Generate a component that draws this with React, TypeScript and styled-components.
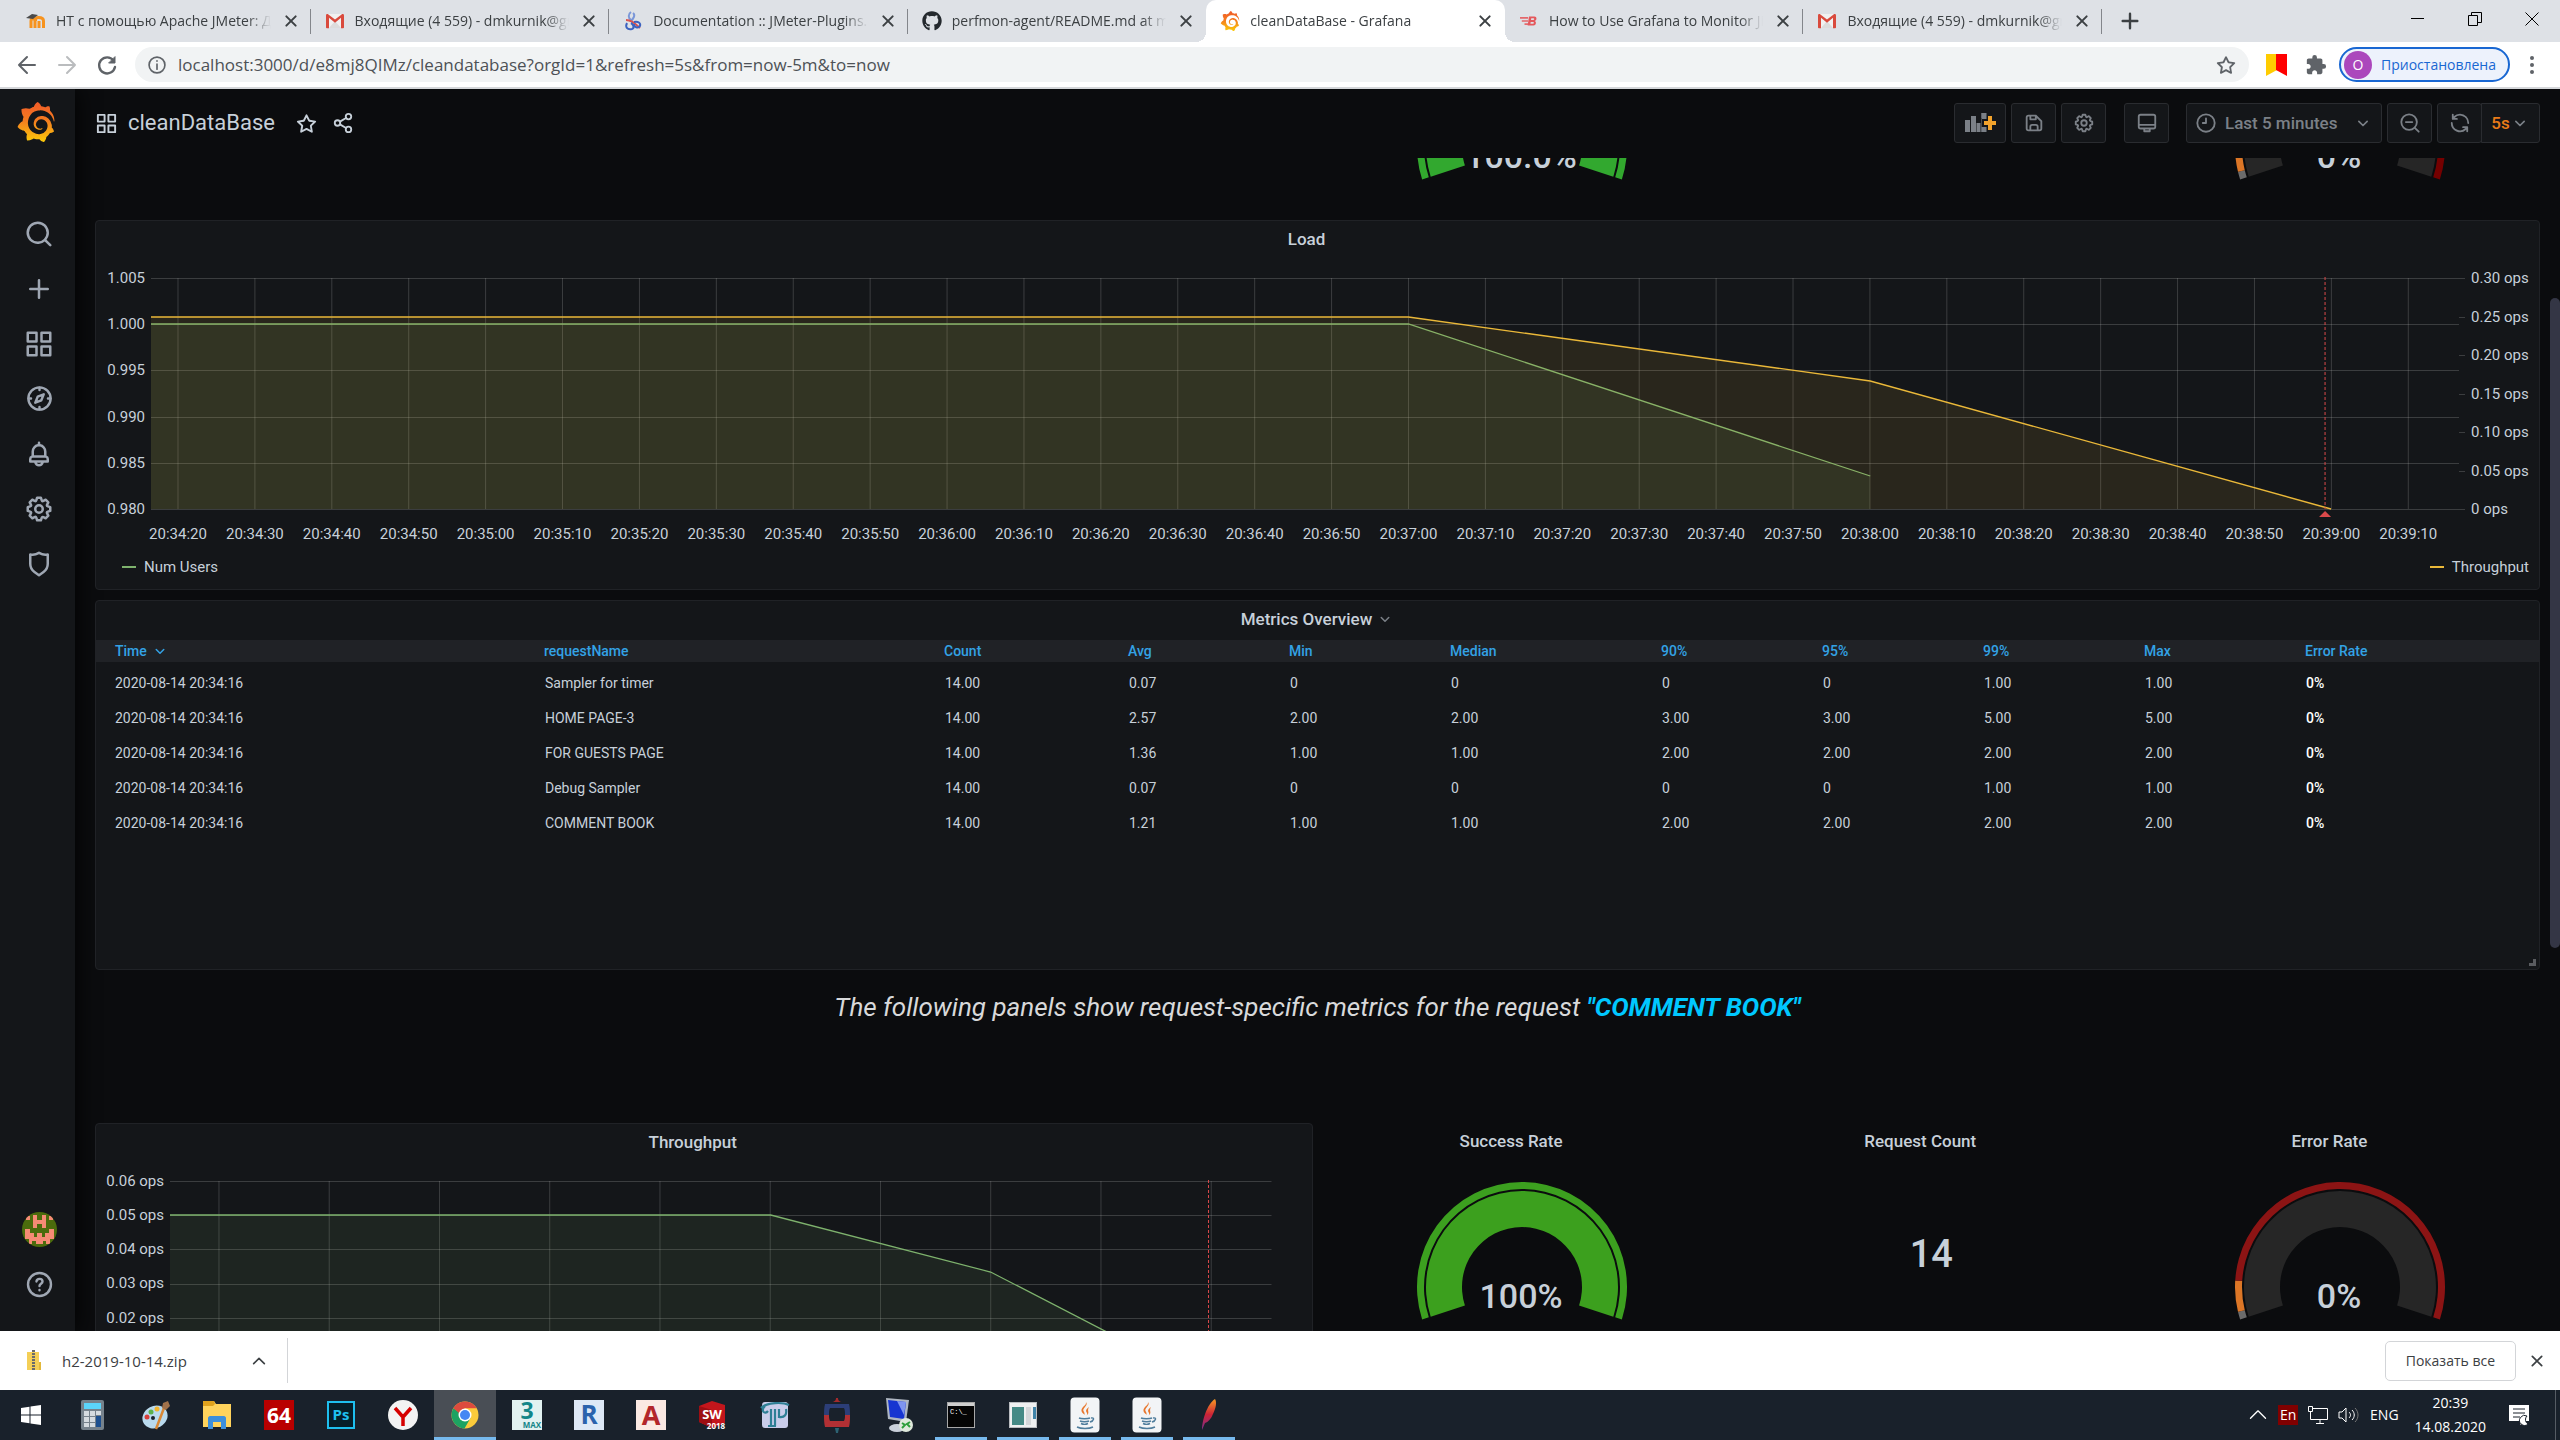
import React from "react";
import styled, { createGlobalStyle, css } from "styled-components";
import { SiGrafana } from "react-icons/si";
import { FaGithub } from "react-icons/fa";
import { MdExtension } from "react-icons/md";

const chromeFont = `"Open Sans", "Noto Sans", sans-serif`;
const grafanaFont = `Roboto, "Liberation Sans", sans-serif`;

const Global = createGlobalStyle`
  *, *::before, *::after { box-sizing: border-box; }
  body { margin: 0; background: #0b0c0e; overflow: hidden; }
  button { border: 0; padding: 0; background: none; font: inherit; color: inherit; cursor: pointer; }
  svg { display: block; flex: none; }
`;

const Screen = styled.div`
  display: flex;
  flex-direction: column;
  height: 100vh;
  font-family: ${grafanaFont};
`;

/* ---------- icons ---------- */

const P = {
  apps: "M10,13H3a1,1,0,0,0-1,1v7a1,1,0,0,0,1,1h7a1,1,0,0,0,1-1V14A1,1,0,0,0,10,13ZM9,20H4V15H9ZM21,2H14a1,1,0,0,0-1,1v7a1,1,0,0,0,1,1h7a1,1,0,0,0,1-1V3A1,1,0,0,0,21,2ZM20,9H15V4h5Zm1,4H14a1,1,0,0,0-1,1v7a1,1,0,0,0,1,1h7a1,1,0,0,0,1-1V14A1,1,0,0,0,21,13Zm-1,7H15V15h5ZM10,2H3A1,1,0,0,0,2,3v7a1,1,0,0,0,1,1h7a1,1,0,0,0,1-1V3A1,1,0,0,0,10,2ZM9,9H4V4H9Z",
  plus: "M19,11H13V5a1,1,0,0,0-2,0v6H5a1,1,0,0,0,0,2h6v6a1,1,0,0,0,2,0V13h6a1,1,0,0,0,0-2Z",
  search: "M21.71,20.29,18,16.61A9,9,0,1,0,16.61,18l3.68,3.68a1,1,0,0,0,1.42,0A1,1,0,0,0,21.71,20.29ZM11,18a7,7,0,1,1,7-7A7,7,0,0,1,11,18Z",
  bell: "M18,13.18V10a6,6,0,0,0-5-5.91V3a1,1,0,0,0-2,0V4.09A6,6,0,0,0,6,10v3.18A3,3,0,0,0,4,16v2a1,1,0,0,0,1,1H8.14a4,4,0,0,0,7.72,0H19a1,1,0,0,0,1-1V16A3,3,0,0,0,18,13.18ZM8,10a4,4,0,0,1,8,0v3H8Zm4,10a2,2,0,0,1-1.72-1h3.44A2,2,0,0,1,12,20Zm6-3H6V16a1,1,0,0,1,1-1H17a1,1,0,0,1,1,1Z",
  cog: "M21.32,9.55l-1.89-.63.89-1.78A1,1,0,0,0,20.13,6L18,3.87a1,1,0,0,0-1.15-.19l-1.78.89-.63-1.89A1,1,0,0,0,13.5,2h-3a1,1,0,0,0-.95.68L8.92,4.57,7.14,3.68A1,1,0,0,0,6,3.87L3.87,6a1,1,0,0,0-.19,1.15l.89,1.78-1.89.63A1,1,0,0,0,2,10.5v3a1,1,0,0,0,.68.95l1.89.63-.89,1.78A1,1,0,0,0,3.87,18L6,20.13a1,1,0,0,0,1.15.19l1.78-.89.63,1.89a1,1,0,0,0,.95.68h3a1,1,0,0,0,.95-.68l.63-1.89,1.78.89A1,1,0,0,0,18,20.13L20.13,18a1,1,0,0,0,.19-1.15l-.89-1.78,1.89-.63A1,1,0,0,0,22,13.5v-3A1,1,0,0,0,21.32,9.55ZM20,12.78l-1.2.4A2,2,0,0,0,17.64,16l.57,1.14-1.1,1.1L16,17.64a2,2,0,0,0-2.79,1.16l-.4,1.2H11.22l-.4-1.2A2,2,0,0,0,8,17.64l-1.14.57-1.1-1.1L6.36,16A2,2,0,0,0,5.2,13.18L4,12.78V11.22l1.2-.4A2,2,0,0,0,6.36,8L5.79,6.89l1.1-1.1L8,6.36A2,2,0,0,0,10.82,5.2l.4-1.2h1.56l.4,1.2A2,2,0,0,0,16,6.36l1.14-.57,1.1,1.1L17.64,8a2,2,0,0,0,1.16,2.79l1.2.4ZM12,8a4,4,0,1,0,4,4A4,4,0,0,0,12,8Zm0,6a2,2,0,1,1,2-2A2,2,0,0,1,12,14Z",
  shield: "M19.63,3.65a1,1,0,0,0-.84-.2,8,8,0,0,1-6.22-1.27,1,1,0,0,0-1.14,0A8,8,0,0,1,5.21,3.45a1,1,0,0,0-.84.2A1,1,0,0,0,4,4.43v7.45a9,9,0,0,0,3.77,7.33l3.65,2.6a1,1,0,0,0,1.16,0l3.65-2.6A9,9,0,0,0,20,11.88V4.43A1,1,0,0,0,19.63,3.65ZM18,11.88a7,7,0,0,1-2.93,5.7L12,19.77,8.93,17.58A7,7,0,0,1,6,11.88V5.58a10,10,0,0,0,6-1.39,10,10,0,0,0,6,1.39Z",
  star: "M22,9.67A1,1,0,0,0,21.14,9l-5.69-.83L12.9,3a1,1,0,0,0-1.8,0L8.55,8.16,2.86,9a1,1,0,0,0-.81.68,1,1,0,0,0,.25,1l4.13,4-1,5.68A1,1,0,0,0,6.9,21.44L12,18.77l5.1,2.67a.93.93,0,0,0,.46.12,1,1,0,0,0,.59-.19,1,1,0,0,0,.4-1l-1-5.68,4.13-4A1,1,0,0,0,22,9.67Zm-6.15,4a1,1,0,0,0-.29.88l.72,4.2-3.76-2a1.06,1.06,0,0,0-.94,0l-3.76,2,.72-4.2a1,1,0,0,0-.29-.88l-3-3,4.21-.61a1,1,0,0,0,.76-.55L12,5.7l1.88,3.82a1,1,0,0,0,.76.55l4.21.61Z",
  save: "M20.71,9.29l-6-6a1,1,0,0,0-.32-.21A1.09,1.09,0,0,0,14,3H6A3,3,0,0,0,3,6V18a3,3,0,0,0,3,3H18a3,3,0,0,0,3-3V10A1,1,0,0,0,20.71,9.29ZM9,5h4V7H9Zm6,14H9V16a1,1,0,0,1,1-1h4a1,1,0,0,1,1,1Zm4-1a1,1,0,0,1-1,1H17V16a3,3,0,0,0-3-3H10a3,3,0,0,0-3,3v3H6a1,1,0,0,1-1-1V6A1,1,0,0,1,6,5H7V8A1,1,0,0,0,8,9h6a1,1,0,0,0,1-1V6.41l4,4Z",
  sync: "M19.91,15.51H15.38a1,1,0,0,0,0,2h2.4A8,8,0,0,1,4,12a1,1,0,1,0-2,0,10,10,0,0,0,16.88,7.23V21a1,1,0,0,0,2,0V16.5A1,1,0,0,0,19.91,15.51ZM12,2A10,10,0,0,0,5.12,4.77V3a1,1,0,0,0-2,0V7.5a1,1,0,0,0,1,1h4.5a1,1,0,0,0,0-2H6.22A8,8,0,0,1,20,12a1,1,0,0,0,2,0A10,10,0,0,0,12,2Z",
};

const Glyph = ({ name, size }: { name: keyof typeof P; size: number }) => (
  <svg width={size} height={size} viewBox="0 0 24 24" fill="currentColor" aria-hidden="true">
    <path d={P[name]} />
  </svg>
);

const Line = ({ size, w = 2, children }: { size: number; w?: number; children: React.ReactNode }) => (
  <svg width={size} height={size} viewBox="0 0 24 24" fill="none" stroke="currentColor" strokeWidth={w} strokeLinecap="round" strokeLinejoin="round" aria-hidden="true">
    {children}
  </svg>
);

const Close = ({ size = 16, w = 3 }) => (
  <Line size={size} w={w}><path d="M5 5l14 14M19 5L5 19" /></Line>
);
const Caret = ({ size = 18 }) => (
  <Line size={size}><path d="M7 10l5 5 5-5" /></Line>
);
const RangeIcon = () => (
  <Line size={22}><circle cx="12" cy="12" r="9.500" /><path d="M12 7v5H8.500" /></Line>
);
const GrafanaMark = ({ size }: { size: number }) => <SiGrafana size={size} fill="url(#flame)" stroke="none" />;

const Gmail = () => (
  <svg width="20" height="20" viewBox="0 0 20 20">
    <path d="M2 3h16v14H2z" fill="#f1f1f1" />
    <path d="M4 17l6-7 6 7z" fill="#dcdcdc" />
    <path d="M1 4.400v12c0 .5.4.8.9.8H4V6.800l6 5 6-5V17.200h2.100c.5 0 .9-.3.9-.8v-12c0-1.300-1.500-1.700-2.400-1L10 8.600 3.400 3.400C2.500 2.700 1 3.100 1 4.400z" fill="#d94a3d" />
  </svg>
);
const Moodle = () => (
  <svg width="20" height="20" viewBox="0 0 20 20" fill="none">
    <path d="M5 17V10c0-3 4-3 4 0v7M9.500 10c0-3 1-3.500 3-3.500s5 .5 5 3.500v7M13 17v-7" stroke="#f7931e" strokeWidth="3" />
    <path d="M0 7l6-4 6 1-5 4z" fill="#4a4a4a" />
  </svg>
);
const PluginMark = () => (
  <svg width="20" height="20" viewBox="0 0 20 20" fill="none" strokeWidth="2">
    <path d="M8 1c-3 2-3 6 0 8M10 2c3 2 0 6-2 8" stroke="#7b97d8" />
    <path d="M3 9c5 0 8 3 14 8" stroke="#d9534f" />
    <path d="M4 12c-2 4 0 7 5 6 3-1 1-5-1-6M11 11c4-1 7 1 6 4-2 3-6 1-6-2" stroke="#3b62c0" />
  </svg>
);
const BlazeMark = () => (
  <svg width="20" height="18" viewBox="0 0 22 20">
    <path d="M1 6.500h9M3 10h7M6 13.500h4" stroke="#e4686c" strokeWidth="1.800" />
    <path d="M11 5h6c3 0 3 4 .5 5 2 .8 1.500 5-1.500 5h-6.500zm2.500 2l-.3 2h2.500c1.500 0 1.500-2 .3-2zm-.6 4l-.3 2h2.700c1.500 0 1.500-2 .3-2z" fill="#e4585c" fillRule="evenodd" />
  </svg>
);

/* ---------- browser chrome ---------- */

const TabStrip = styled.div`
  display: flex;
  flex: none;
  height: 42px;
  padding-left: 12px;
  background: #dee1e6;
  color: #3c4043;
  font: 14px/20px ${chromeFont};
`;
const Tabs = styled.div`
  display: flex;
  flex: 0 1 2090px;
  min-width: 0;
`;
const Tab = styled.div<{ $active?: boolean; $divider?: boolean }>`
  position: relative;
  display: flex;
  flex: 1 1 0;
  min-width: 0;
  align-items: center;
  gap: 10px;
  padding: 0 10px 0 14px;
  ${(p) => p.$divider && css`
    &::after { content: ""; position: absolute; right: 0; top: 9px; width: 1px; height: 25px; background: #83868b; }
  `}
  ${(p) => p.$active && css`
    background: #fff;
    border-radius: 10px 10px 0 0;
    &::before, &::after {
      content: ""; position: absolute; bottom: 0; width: 10px; height: 10px;
    }
    &::before { left: -10px; background: radial-gradient(circle at 0 0, transparent 10px, #fff 10px); }
    &::after { right: -10px; background: radial-gradient(circle at 100% 0, transparent 10px, #fff 10px); }
  `}
`;
const TabTitle = styled.a`
  flex: 1;
  min-width: 0;
  overflow: hidden;
  white-space: nowrap;
  color: inherit;
  text-decoration: none;
  mask-image: linear-gradient(to right, #000 calc(100% - 24px), transparent);
`;
const TabClose = styled.button`
  display: grid;
  place-items: center;
  width: 20px;
  height: 20px;
`;
const NewTab = styled.button`
  display: grid;
  place-items: center;
  width: 56px;
`;
const WindowButtons = styled.div`
  display: flex;
  margin-left: auto;
  color: #111;
`;
const WindowButton = styled.button`
  display: grid;
  place-items: center;
  width: 57px;
  height: 37px;
`;

const Toolbar = styled.div`
  display: flex;
  flex: none;
  align-items: center;
  height: 47px;
  padding: 0 18px 0 7px;
  background: #fff;
  border-bottom: 2px solid #d5d7da;
  color: #5f6368;
  font: 17px/22px ${chromeFont};
`;
const NavButton = styled.button<{ $dim?: boolean }>`
  display: grid;
  place-items: center;
  width: 40px;
  height: 35px;
  color: ${(p) => (p.$dim ? "#babcbe" : "#5f6368")};
`;
const Omnibox = styled.label`
  display: flex;
  flex: 1;
  min-width: 0;
  align-items: center;
  gap: 11px;
  height: 35px;
  margin: 0 17px 0 8px;
  padding: 0 12px;
  border-radius: 18px;
  background: #f1f3f4;
`;
const Url = styled.input`
  flex: 1;
  min-width: 0;
  border: 0;
  padding: 0;
  outline: 0;
  background: none;
  color: #4d5156;
  font: inherit;
`;
const Extensions = styled.div`
  display: flex;
  align-items: center;
  gap: 18px;
`;
const Profile = styled.button`
  && {
    display: flex;
    align-items: center;
    gap: 9px;
    height: 35px;
    margin: 0 12px;
    padding: 0 12px 0 3px;
    border: 2px solid #1967d2;
    border-radius: 18px;
    background: #edf2fc;
    color: #1967d2;
    font-size: 14px;
  }
`;
const ProfileBadge = styled.span`
  width: 28px;
  height: 28px;
  border-radius: 50%;
  background: #ab47bc;
  color: #fff;
  line-height: 28px;
  text-align: center;
`;

const tabs = [
  { icon: <Moodle />, title: "НТ с помощью Apache JMeter: Д", divider: true },
  { icon: <Gmail />, title: "Входящие (4 559) - dmkurnik@gmail.com", divider: true },
  { icon: <PluginMark />, title: "Documentation :: JMeter-Plugins.org", divider: true },
  { icon: <FaGithub size={20} color="#24292e" />, title: "perfmon-agent/README.md at master" },
  { icon: <GrafanaMark size={20} />, title: "cleanDataBase - Grafana", active: true },
  { icon: <BlazeMark />, title: "How to Use Grafana to Monitor JMeter", divider: true },
  { icon: <Gmail />, title: "Входящие (4 559) - dmkurnik@gmail.com", divider: true },
];

const Browser = () => (
  <>
    <TabStrip>
      <Tabs>
        {tabs.map((t, i) => (
          <Tab key={i} $active={t.active} $divider={t.divider}>
            {t.icon}
            <TabTitle href="#">{t.title}</TabTitle>
            <TabClose aria-label="Закрыть вкладку"><Close /></TabClose>
          </Tab>
        ))}
      </Tabs>
      <NewTab aria-label="Новая вкладка"><Line size={22} w={2.600}><path d="M12 4v16M4 12h16" /></Line></NewTab>
      <WindowButtons>
        <WindowButton aria-label="Свернуть"><svg width="14" height="14"><path d="M0 6.500h13" stroke="#000" /></svg></WindowButton>
        <WindowButton aria-label="Развернуть"><svg width="14" height="14" fill="none" stroke="#000"><path d="M.5 3.500h9v10h-9zM3.500 3.500v-3h10v10h-4" /></svg></WindowButton>
        <WindowButton aria-label="Закрыть"><svg width="14" height="14"><path d="M.5.5l13 13M13.500.5l-13 13" stroke="#000" /></svg></WindowButton>
      </WindowButtons>
    </TabStrip>
    <Toolbar>
      <NavButton aria-label="Назад"><Line size={24}><path d="M20 12H4M12 4l-8 8 8 8" /></Line></NavButton>
      <NavButton aria-label="Вперёд" $dim><Line size={24}><path d="M4 12h16M12 4l8 8-8 8" /></Line></NavButton>
      <NavButton aria-label="Обновить"><Line size={24} w={2.400}><path d="M18.500 7.500A8 8 0 1 0 20 14" /><path d="M20 4v6h-6z" fill="currentColor" strokeWidth="1" /></Line></NavButton>
      <Omnibox>
        <Line size={20}><circle cx="12" cy="12" r="9.500" /><path d="M12 11v6M12 7v.5" /></Line>
        <Url aria-label="Адрес" readOnly value="localhost:3000/d/e8mj8QIMz/cleandatabase?orgId=1&refresh=5s&from=now-5m&to=now" />
        <Glyph name="star" size={22} />
      </Omnibox>
      <Extensions>
        <svg width="21" height="22"><path d="M0 0h11v16L0 22z" fill="#fc0" /><path d="M10 0h11v22L10 16z" fill="#f00" /></svg>
        <button aria-label="Расширения"><MdExtension size={22} /></button>
      </Extensions>
      <Profile><ProfileBadge>О</ProfileBadge>Приостановлена</Profile>
      <svg width="20" height="20" fill="#5f6368"><circle cx="10" cy="3" r="2" /><circle cx="10" cy="10" r="2" /><circle cx="10" cy="17" r="2" /></svg>
    </Toolbar>
  </>
);

/* ---------- grafana shell ---------- */

const Shell = styled.div`
  display: flex;
  flex: 1;
  min-height: 0;
  overflow: hidden;
  background: #0b0c0e;
  color: #c7d0d9;
`;
const Sidebar = styled.nav`
  display: flex;
  flex: none;
  flex-direction: column;
  align-items: center;
  width: 75px;
  padding: 13px 0 19px 3px;
  background: #141619;
  box-shadow: 0 0 25px #000;
  color: #9fa7b3;
`;
const SideLink = styled.a<{ $first?: boolean }>`
  display: grid;
  place-items: center;
  width: 100%;
  height: 55px;
  color: inherit;
  margin-top: ${(p) => (p.$first ? "auto" : "0")};
`;
const BrandLink = styled.a`
  display: block;
  margin: 0 6px 64px 0;
`;
const Page = styled.main`
  display: flex;
  flex: 1;
  min-width: 0;
  flex-direction: column;
`;
const PageBar = styled.header`
  display: flex;
  flex: none;
  align-items: center;
  height: 69px;
  padding: 0 20px 1px;
  gap: 5px;
`;
const Crumb = styled.h1`
  display: flex;
  flex: 1;
  align-items: center;
  gap: 10px;
  margin: 0;
  font-size: 22px;
  line-height: 28px;
  font-weight: 400;
`;
const CrumbButton = styled.button`
  display: grid;
  place-items: center;
  width: 27px;
  height: 26px;
  &:first-of-type { margin-left: 8px; }
`;
const ToolButton = styled.button<{ $w?: number; $gap?: number; $accent?: boolean; $join?: boolean }>`
  && {
    display: flex;
    align-items: center;
    justify-content: center;
    height: 40px;
    width: ${(p) => p.$w ?? 45}px;
    margin-left: ${(p) => (p.$join ? -6 : p.$gap ?? 0)}px;
    padding: 0 8px;
    border: 1px solid #2a2c30;
    border-radius: ${(p) => (p.$join ? "0 3px 3px 0" : "3px")};
    background: #141619;
    color: ${(p) => (p.$accent ? "#eb7b18" : "#7b8087")};
    font-size: 17px;
    line-height: 24px;
    font-weight: 500;
  }
`;
const RangeText = styled.span`
  flex: 1;
  padding-left: 8px;
  text-align: left;
`;
const Dim = styled.span`
  color: #7b8087;
`;
const Viewport = styled.div`
  display: flex;
  flex: 1;
  min-height: 0;
`;
const Dashboard = styled.div`
  display: grid;
  flex: 1;
  min-width: 0;
  overflow: hidden;
  grid-template-columns: repeat(6, minmax(0, 1fr));
  grid-template-rows: 52px 370px 370px 133px 370px;
  gap: 10px;
  padding: 0 10px 0 20px;
`;
const ScrollTrack = styled.div`
  flex: none;
  width: 10px;
  padding-top: 140px;
`;
const ScrollThumb = styled.div`
  height: 650px;
  border-radius: 5px;
  background: #343645;
`;
const Panel = styled.section<{ $span: number; $plain?: boolean; $bottom?: boolean }>`
  position: relative;
  display: flex;
  flex-direction: column;
  grid-column: span ${(p) => p.$span};
  min-width: 0;
  min-height: 0;
  ${(p) => !p.$plain && css`
    background: #141619;
    border: 1px solid #202226;
    border-radius: 4px;
  `}
  ${(p) => p.$bottom && css`
    justify-content: flex-end;
    overflow: hidden;
    padding-bottom: 29px;
  `}
`;
const PanelTitle = styled.h2`
  display: flex;
  flex: none;
  align-items: center;
  justify-content: center;
  gap: 4px;
  height: 39px;
  margin: 0;
  padding-bottom: 3px;
  font-size: 17px;
  line-height: 24px;
  font-weight: 500;
`;
const TitleCaret = styled.span<{ $hidden?: boolean }>`
  color: #7b8087;
  visibility: ${(p) => (p.$hidden ? "hidden" : "visible")};
`;
const Title = ({ children, caret }: { children: React.ReactNode; caret?: boolean }) => (
  <PanelTitle>
    {children}
    <TitleCaret $hidden={!caret}><Caret /></TitleCaret>
  </PanelTitle>
);

/* ---------- charts ---------- */

const ChartRow = styled.div`
  display: flex;
  padding: 8px 10px 0;
  font-size: 15px;
  line-height: 20px;
`;
const Axis = styled.div<{ $w: number; $h: number; $right?: boolean }>`
  display: flex;
  flex: none;
  flex-direction: column;
  justify-content: space-between;
  width: ${(p) => p.$w}px;
  height: ${(p) => p.$h + 20}px;
  white-space: nowrap;
  text-align: ${(p) => (p.$right ? "left" : "right")};
  padding: ${(p) => (p.$right ? "0 0 0 12px" : "0 6px 0 0")};
`;
const AxisLabel = styled.span`
  height: 20px;
`;
const PlotMargin = styled.div`
  flex: none;
  width: 30px;
`;
const Plot = styled.svg`
  flex: 1;
  min-width: 0;
  margin-top: 10px;
  overflow: visible;
  font-family: ${grafanaFont};
  font-size: 15px;
`;
const Legend = styled.div`
  display: flex;
  justify-content: space-between;
  padding: 8px 10px 0 26px;
  font-size: 15px;
  line-height: 20px;
`;
const LegendItem = styled.button<{ $color: string }>`
  && {
    display: flex;
    align-items: center;
    gap: 8px;
  }
  &::before {
    content: "";
    width: 14px;
    height: 2px;
    background: ${(p) => p.$color};
  }
`;

type Series = { color: string; points: [number, number][] };
type PlotProps = {
  h: number; w: number; first: number; step: number; labels: string[]; times?: boolean;
  rows: number; rightTicks?: number; series: Series[]; mark: number;
};

const TimePlot = ({ h, w, first, step, labels, times, rows, rightTicks, series, mark }: PlotProps) => {
  const pct = (x: number) => `${(x / w) * 100}%`;
  return (
    <Plot height={h + 40}>
      <g stroke="#c8c8c8" strokeOpacity="0.22">
        {Array.from({ length: rows + 1 }, (_, i) => {
          const y = Math.round((h * i) / rows) + 0.5;
          return <line key={i} x1="0" x2="100%" y1={y} y2={y} />;
        })}
        {labels.map((t, i) => (
          <line key={t} x1={pct(first + i * step)} x2={pct(first + i * step)} y1="0" y2={h} />
        ))}
      </g>
      {rightTicks && (
        <svg x="100%" overflow="visible" stroke="#c8c8c8" strokeOpacity="0.22">
          {Array.from({ length: rightTicks }, (_, i) => {
            const y = Math.round((h * i) / (rightTicks - 1)) + 0.5;
            return <line key={i} x1="0" x2="6" y1={y} y2={y} />;
          })}
        </svg>
      )}
      <svg width="100%" height={h} viewBox={`0 0 ${w} ${h}`} preserveAspectRatio="none" overflow="visible">
        {series.map((s) => {
          const line = s.points.map((p) => p.join(",")).join(" ");
          const last = s.points[s.points.length - 1][0];
          return (
            <g key={s.color}>
              <polygon points={`0,${h} ${line} ${last},${h}`} fill={s.color} fillOpacity="0.1" />
              <polyline points={line} fill="none" stroke={s.color} strokeWidth="1.300" vectorEffect="non-scaling-stroke" />
            </g>
          );
        })}
      </svg>
      <line x1={pct(mark)} x2={pct(mark)} y1="-1" y2={h} stroke="#d9494a" strokeDasharray="3 2" />
      <svg x={pct(mark)} y={h + 2} overflow="visible"><path d="M-6 6L0 0l6 6z" fill="#d9494a" /></svg>
      {times && (
        <g fill="#c7d0d9" textAnchor="middle">
          {labels.map((t, i) => (
            <text key={t} x={pct(first + i * step)} y={h + 30}>{t}</text>
          ))}
        </g>
      )}
    </Plot>
  );
};

const clock = (start: number, every: number, n: number) =>
  Array.from({ length: n }, (_, i) => {
    const s = start + i * every;
    const two = (v: number) => String(v).padStart(2, "0");
    return `20:${two(34 + Math.floor(s / 60))}:${two(s % 60)}`;
  });

/* ---------- gauges ---------- */

const GaugeBody = styled.div<{ $top?: boolean }>`
  display: flex;
  flex: none;
  justify-content: center;
  padding-top: ${(p) => (p.$top ? 20 : 0)}px;
`;
const ring = (r1: number, r2: number, from: number, to: number) => {
  const pt = (r: number, t: number) => {
    const a = ((198 - 216 * t) * Math.PI) / 180;
    return `${105 + r * Math.cos(a)} ${105 - r * Math.sin(a)}`;
  };
  const big = (to - from) * 216 > 180 ? 1 : 0;
  return `M${pt(r1, from)}A${r1} ${r1} 0 ${big} 1 ${pt(r1, to)}L${pt(r2, to)}A${r2} ${r2} 0 ${big} 0 ${pt(r2, from)}Z`;
};
const Gauge = ({ text, fill, bands, top }: { text: string; fill: string; bands: [number, number, string][]; top?: boolean }) => (
  <GaugeBody $top={top}>
    <svg width="210" height="139" viewBox="0 0 210 139" role="img" aria-label={text}>
      {bands.map(([a, b, c]) => <path key={c} d={ring(105, 98, a, b)} fill={c} />)}
      <path d={ring(96, 60, 0, 1)} fill={fill} />
      <text x="104" y="126" textAnchor="middle" fill="#c7d0d9" fontFamily={grafanaFont} fontSize="34" fontWeight="500">{text}</text>
    </svg>
  </GaugeBody>
);
const BigNumber = styled.div`
  display: grid;
  flex: 1;
  place-items: center;
  padding-bottom: 148px;
  font-size: 38px;
  line-height: 44px;
  font-weight: 500;
`;

/* ---------- table ---------- */

const Table = styled.table`
  width: 100%;
  table-layout: fixed;
  border-collapse: collapse;
  font-size: 14px;
  line-height: 20px;
  text-align: left;
  th { height: 22px; padding: 0; background: #202226; color: #33a2e5; font-weight: 500; }
  td { height: 35px; padding: 0 0 0 1px; }
  tbody tr:first-child td { height: 38px; padding-top: 3px; }
  th:first-child, td:first-child { padding-left: 19px; }
  td:last-child { color: #fff; font-weight: 500; }
`;
const SortHead = styled.button`
  && {
    display: flex;
    align-items: center;
    gap: 4px;
    font-weight: 500;
    line-height: 20px;
  }
`;
const ResizeMark = styled.svg`
  position: absolute;
  right: 3px;
  bottom: 3px;
`;
const columns: [string, number][] = [
  ["Time", 448], ["requestName", 400], ["Count", 184], ["Avg", 161], ["Min", 161], ["Median", 211],
  ["90%", 161], ["95%", 161], ["99%", 161], ["Max", 161], ["Error Rate", 234],
];
const rows = [
  ["Sampler for timer", "14.00", "0.07", "0", "0", "0", "0", "1.00", "1.00", "0%"],
  ["HOME PAGE-3", "14.00", "2.57", "2.00", "2.00", "3.00", "3.00", "5.00", "5.00", "0%"],
  ["FOR GUESTS PAGE", "14.00", "1.36", "1.00", "1.00", "2.00", "2.00", "2.00", "2.00", "0%"],
  ["Debug Sampler", "14.00", "0.07", "0", "0", "0", "0", "1.00", "1.00", "0%"],
  ["COMMENT BOOK", "14.00", "1.21", "1.00", "1.00", "2.00", "2.00", "2.00", "2.00", "0%"],
];

const Note = styled.p`
  margin: 11px 0 0;
  text-align: center;
  font-size: 26px;
  line-height: 32px;
  font-style: italic;
  color: #d8d9da;
  strong { font-weight: 700; color: #00c8ff; }
`;
const RightHalf = styled.div`
  display: grid;
  grid-column: 4 / span 3;
  grid-template-columns: repeat(3, minmax(0, 1fr));
  gap: 10px;
  min-height: 0;
`;

const Avatar = () => (
  <svg width="35" height="35" viewBox="0 0 35 35">
    <clipPath id="round"><circle cx="17.500" cy="17.500" r="17.500" /></clipPath>
    <g clipPath="url(#round)">
      <path d="M0 0h35v35H0z" fill="#4b6b0c" />
      <path d="M11 3h4v5h5V3h4v13h-4v-4h-5v4h-4zM4 4h4v4H4zM27 4h4v4h-4zM3 17h5v4h4v4h3v-4h5v4h3v-4h4v-4h5v10h-4v5h-4v-3h-3v3h-7v-3h-4v3H7v-5H3z" fill="#f58b74" />
    </g>
  </svg>
);

const Compass = () => (
  <Line size={29}>
    <circle cx="12" cy="12" r="9.200" />
    <path d="M15.500 8.500l-2 5-5 2 2-5z" />
    <path d="M12 3v2M12 19v2M3 12h2M19 12h2" />
  </Line>
);

const GrafanaPage = () => (
  <Shell>
    <Sidebar aria-label="Grafana">
      <BrandLink href="#" aria-label="Home"><GrafanaMark size={40} /></BrandLink>
      <SideLink href="#" aria-label="Search"><Glyph name="search" size={30} /></SideLink>
      <SideLink href="#" aria-label="Create"><Glyph name="plus" size={30} /></SideLink>
      <SideLink href="#" aria-label="Dashboards"><Glyph name="apps" size={30} /></SideLink>
      <SideLink href="#" aria-label="Explore"><Compass /></SideLink>
      <SideLink href="#" aria-label="Alerting"><Glyph name="bell" size={30} /></SideLink>
      <SideLink href="#" aria-label="Configuration"><Glyph name="cog" size={30} /></SideLink>
      <SideLink href="#" aria-label="Server admin"><Glyph name="shield" size={30} /></SideLink>
      <SideLink href="#" aria-label="Profile" $first><Avatar /></SideLink>
      <SideLink href="#" aria-label="Help">
        <Line size={29}><circle cx="12" cy="12" r="9.500" /><path d="M9.500 9.500c.3-3 5-2.800 5 0 0 1.800-2.500 1.900-2.500 3.700M12 16.500v.2" /></Line>
      </SideLink>
    </Sidebar>
    <Page>
      <PageBar>
        <Crumb>
          <Glyph name="apps" size={23} />
          cleanDataBase
          <CrumbButton aria-label="Mark as favorite"><Glyph name="star" size={23} /></CrumbButton>
          <CrumbButton aria-label="Share dashboard">
            <Line size={22}><circle cx="18" cy="5" r="3" /><circle cx="6" cy="12" r="3" /><circle cx="18" cy="19" r="3" /><path d="M8.700 10.500l6.600-4M8.700 13.500l6.600 4" /></Line>
          </CrumbButton>
        </Crumb>
        <ToolButton $w={52} aria-label="Add panel">
          <svg width="31" height="22" viewBox="0 0 31 22">
            <path d="M0 8h5v12H0zM6 4h5v16H6zM11.500 11h4v9h-4zM16.500 1h5v19h-5z" fill="#7b8087" />
            <path d="M17 7h6V2h8v18h-8v-5h-6z" fill="#141619" />
            <path d="M16.500 1h4v5h-4zM16.500 15h4v5h-4z" fill="#7b8087" />
            <path d="M23 4h4v5h4v4h-4v5h-4v-5h-4V9h4z" fill="#f2a32c" />
          </svg>
        </ToolButton>
        <ToolButton aria-label="Save dashboard"><Glyph name="save" size={22} /></ToolButton>
        <ToolButton aria-label="Dashboard settings"><Glyph name="cog" size={22} /></ToolButton>
        <ToolButton $gap={13} aria-label="Cycle view mode">
          <Line size={22}><path d="M5 3h14a2 2 0 0 1 2 2v11a2 2 0 0 1-2 2H5a2 2 0 0 1-2-2V5a2 2 0 0 1 2-2zM3 14h18M9 18v3h6v-3" /></Line>
        </ToolButton>
        <ToolButton $w={196} $gap={12}>
          <RangeIcon />
          <RangeText>Last 5 minutes</RangeText>
          <Caret size={20} />
        </ToolButton>
        <ToolButton aria-label="Zoom out">
          <Line size={22}><circle cx="11" cy="11" r="8.500" /><path d="M17.500 17.500L21.500 21.500M7.500 11h7" /></Line>
        </ToolButton>
        <ToolButton aria-label="Refresh"><Glyph name="sync" size={22} /></ToolButton>
        <ToolButton $w={59} $join $accent>5s<Dim><Caret size={20} /></Dim></ToolButton>
      </PageBar>
      <Viewport>
        <Dashboard>
          <RightHalf>
            <Panel $span={1} $plain $bottom><Gauge text="100.0%" fill="#32a82f" bands={[[0, 1, "#32a82e"]]} /></Panel>
            <Panel $span={1} $plain />
            <Panel $span={1} $plain $bottom>
              <Gauge text="0%" fill="#262626" bands={[[0, 0.02, "#6b6b6b"], [0.02, 0.1, "#dc7626"], [0.1, 1, "#750000"]]} />
            </Panel>
          </RightHalf>

          <Panel $span={6}>
            <Title>Load</Title>
            <ChartRow>
              <Axis $w={45} $h={231}>
                {["1.005", "1.000", "0.995", "0.990", "0.985", "0.980"].map((t) => <AxisLabel key={t}>{t}</AxisLabel>)}
              </Axis>
              <TimePlot
                h={231} w={2309} first={27} step={76.94} labels={clock(20, 10, 30)} times rows={5} rightTicks={7} mark={2175}
                series={[
                  { color: "#7eb26d", points: [[0, 46], [1258, 46], [1720, 198]] },
                  { color: "#eab839", points: [[0, 39], [1258, 39], [1720, 103], [2181, 231]] },
                ]}
              />
              <Axis $w={70} $h={231} $right>
                {["0.30", "0.25", "0.20", "0.15", "0.10", "0.05", "0"].map((t) => <AxisLabel key={t}>{t} ops</AxisLabel>)}
              </Axis>
            </ChartRow>
            <Legend>
              <LegendItem $color="#7eb26d">Num Users</LegendItem>
              <LegendItem $color="#eab839">Throughput</LegendItem>
            </Legend>
          </Panel>

          <Panel $span={6}>
            <Title caret>Metrics Overview</Title>
            <Table>
              <colgroup>{columns.map(([n, w]) => <col key={n} width={w} />)}</colgroup>
              <thead>
                <tr>
                  {columns.map(([n], i) => (
                    <th key={n} scope="col">{i ? n : <SortHead>{n}<Caret /></SortHead>}</th>
                  ))}
                </tr>
              </thead>
              <tbody>
                {rows.map((r) => (
                  <tr key={r[0]}>
                    <td>2020-08-14 20:34:16</td>
                    {r.map((c, i) => <td key={i}>{c}</td>)}
                  </tr>
                ))}
              </tbody>
            </Table>
            <ResizeMark width="7" height="7"><path d="M4 0h3v7H0V4h4z" fill="#5a5c60" /></ResizeMark>
          </Panel>

          <Panel $span={6} $plain>
            <Note>The following panels show request-specific metrics for the request <strong>"COMMENT BOOK"</strong></Note>
          </Panel>

          <Panel $span={3}>
            <Title>Throughput</Title>
            <ChartRow>
              <Axis $w={64} $h={205}>
                {["0.06 ops", "0.05 ops", "0.04 ops", "0.03 ops", "0.02 ops"].map((t) => <AxisLabel key={t}>{t}</AxisLabel>)}
                <AxisLabel />
                <AxisLabel />
              </Axis>
              <TimePlot
                h={205} w={1102} first={49} step={110.3} labels={clock(30, 30, 10)} rows={6} mark={1039}
                series={[{ color: "#7eb26d", points: [[0, 34], [601, 34], [821, 91], [1042, 205]] }]}
              />
              <PlotMargin />
            </ChartRow>
          </Panel>
          <RightHalf>
            <Panel $span={1} $plain>
              <Title>Success Rate</Title>
              <Gauge top text="100%" fill="#3ca01e" bands={[[0, 1, "#3ca01f"]]} />
            </Panel>
            <Panel $span={1} $plain>
              <Title>Request Count</Title>
              <BigNumber>14</BigNumber>
            </Panel>
            <Panel $span={1} $plain>
              <Title>Error Rate</Title>
              <Gauge top text="0%" fill="#262626" bands={[[0, 0.02, "#6b6b6b"], [0.02, 0.1, "#dc7626"], [0.1, 1, "#8c1414"]]} />
            </Panel>
          </RightHalf>
        </Dashboard>
        <ScrollTrack><ScrollThumb /></ScrollTrack>
      </Viewport>
    </Page>
  </Shell>
);

/* ---------- downloads ---------- */

const Downloads = styled.div`
  display: flex;
  flex: none;
  align-items: center;
  height: 59px;
  padding: 0 15px 0 26px;
  background: #fff;
  color: #3c4043;
  font: 14px/20px ${chromeFont};
`;
const DownloadItem = styled.div`
  display: flex;
  align-items: center;
  width: 262px;
  height: 45px;
  padding-right: 20px;
  gap: 20px;
  border-right: 1px solid #d3d5d8;
`;
const FileLink = styled.a`
  flex: 1;
  color: inherit;
  font-size: 15px;
  text-decoration: none;
`;
const ShowAll = styled.button`
  && {
    height: 40px;
    margin: 0 13px 0 auto;
    padding: 0 20px;
    border: 1px solid #d3d5d8;
    border-radius: 5px;
  }
`;

/* ---------- taskbar ---------- */

const Taskbar = styled.footer`
  display: flex;
  flex: none;
  align-items: center;
  height: 50px;
  background: #19212b;
  color: #fff;
  font: 14px/18px ${chromeFont};
`;
const TaskButton = styled.button<{ $on?: boolean; $run?: boolean }>`
  && {
    display: grid;
    place-items: center;
    width: 62px;
    height: 50px;
    background: ${(p) => (p.$on ? "#494e55" : "none")};
    ${(p) => (p.$on || p.$run) && css`
      background-image: linear-gradient(#76b9ed, #76b9ed);
      background-repeat: no-repeat;
      background-position: 50% 100%;
      background-size: ${p.$on ? "100%" : "52px"} 3px;
    `}
  }
`;
const Tray = styled.div`
  display: flex;
  align-items: center;
  gap: 10px;
  margin-left: auto;
  padding-right: 4px;
`;
const LangBox = styled.span`
  width: 20px;
  height: 20px;
  background: #800000;
  line-height: 20px;
  text-align: center;
`;
const Clock = styled.time`
  margin: 0 13px 0 6px;
  text-align: center;
  line-height: 24px;
`;
const PeekEdge = styled.div`
  width: 1px;
  height: 50px;
  margin-left: 16px;
  background: #565c64;
`;

const Tile = ({ bg, fg, text, size = 22, sub, edge }: { bg: string; fg: string; text: string; size?: number; sub?: string; edge?: string }) => (
  <svg width="30" height="30" viewBox="0 0 30 30">
    <rect x={edge ? 2 : 0} y={edge ? 2 : 0} width={edge ? 26 : 30} height={edge ? 26 : 30} fill={bg} stroke={edge} strokeWidth={edge ? 2 : 0} />
    <text x="15" y={sub ? 19 : 15 + size * 0.36} textAnchor="middle" fontFamily="Open Sans, sans-serif" fontWeight="700" fontSize={size} fill={fg}>{text}</text>
    {sub && <text x="20" y="28" textAnchor="middle" fontFamily="Open Sans, sans-serif" fontWeight="700" fontSize="8" fill={fg}>{sub}</text>}
  </svg>
);
const JavaTile = () => (
  <svg width="30" height="36" viewBox="0 0 30 36">
    <rect x=".5" y=".5" width="29" height="35" rx="4" fill="#f2f4f6" />
    <g transform="translate(0 4)">
      <path d="M16 1c3 4-5 6-2 10 1 1 0 2 1 3-6-4-3-7-1-9 2-1.500 2-2.500 2-4zM19 6c-4 3-3 4-2 6 .5 1 0 2-.5 2.500 4-3 0-4 2.500-8.500z" fill="#e8762c" />
      <path d="M9 17c2 1 9 1 11 0M10 20c2 1 7 1 9 0M11 22.500c2 1 5 1 7 0M7 26c4 2 12 2 16 0M21 17c4-1 3 3-1 4" fill="none" stroke="#4f7d9c" strokeWidth="1.400" />
    </g>
  </svg>
);

const ChromeIcon = () => (
  <svg width="30" height="30" viewBox="0 0 30 30">
    <circle cx="15" cy="15" r="13.500" fill="#fccb3b" />
    <path d="M15 15L3.300 8.300A13.500 13.500 0 0 0 14.500 28.500l6-10.500z" fill="#1da362" />
    <path d="M15 1.500a13.500 13.500 0 0 1 11.700 6.800H15L9 13 3.300 8.300A13.500 13.500 0 0 1 15 1.500z" fill="#dd4b3e" />
    <circle cx="15" cy="15" r="6.500" fill="#fff" /><circle cx="15" cy="15" r="5" fill="#4587f3" />
  </svg>
);

const apps: { name: string; icon: React.ReactNode; on?: boolean; run?: boolean }[] = [
  { name: "Калькулятор", icon: <svg width="24" height="30"><rect width="23" height="30" rx="2" fill="#76828c" /><path d="M3 3h17v6H3z" fill="#5bd5fb" /><path d="M3 11h5v5H3zM9 11h5v5H9zM15 11h5v4h-5zM3 17h5v5H3zM9 17h5v5H9zM3 23h5v4H3zM9 23h5v4H9z" fill="#d5dbe0" /><path d="M15 16h5v11h-5z" fill="#1c4f8f" /></svg> },
  { name: "Paint", icon: <svg width="30" height="30"><ellipse cx="15" cy="17" rx="13" ry="11" fill="#b9daee" transform="rotate(-28 15 17)" /><circle cx="7" cy="17" r="2.500" fill="#d8403a" /><circle cx="11" cy="12" r="2.500" fill="#5bb14c" /><circle cx="17" cy="9" r="2.500" fill="#f3b52d" /><circle cx="13" cy="18" r="2" fill="#19212b" /><path d="M16 29l8-21" stroke="#d98836" strokeWidth="2.500" /><path d="M23 3l5-2 2 5-4 4-4-2z" fill="#a0714a" /></svg> },
  { name: "Проводник", icon: <svg width="28" height="28"><path d="M0 0h11l2 3h15v23H0z" fill="#ffd35c" /><path d="M0 0h11l1 3-2 2H0z" fill="#e0a21d" /><path d="M5 28V17c0-1 1-2 2-2h14c1 0 2 1 2 2v11h-5v-7h-8v7z" fill="#3d8fdb" /></svg> },
  { name: "AIDA64", icon: <Tile bg="#b90000" fg="#fff" text="64" size={21} /> },
  { name: "Photoshop", icon: <Tile bg="#061e29" fg="#1ebfef" text="Ps" size={15} edge="#1ebfef" /> },
  { name: "Яндекс", icon: <svg width="30" height="30"><circle cx="15" cy="15" r="15" fill="#f3f3f3" /><path d="M7 8l8 9 8-9M15 16v10" fill="none" stroke="#d60000" strokeWidth="3.500" /></svg> },
  { name: "Chrome", icon: <ChromeIcon />, on: true },
  { name: "3ds Max", icon: <Tile bg="#e2f2f1" fg="#138688" text="3" size={23} sub="MAX" /> },
  { name: "Revit", icon: <Tile bg="#dde8f6" fg="#2a62ad" text="R" size={26} /> },
  { name: "AutoCAD", icon: <Tile bg="#fbe9e3" fg="#b3262a" text="A" size={27} /> },
  { name: "SolidWorks", icon: <svg width="30" height="30"><path d="M1 6l13-5 13 4v18l-13 5-13-6z" fill="#c3161c" /><path d="M1 6l13 4v18L1 22z" fill="#9c0e13" /><text x="14" y="19" textAnchor="middle" fontFamily="Open Sans" fontWeight="700" fontSize="13" fill="#fff">SW</text><text x="18" y="29" textAnchor="middle" fontFamily="Open Sans" fontWeight="700" fontSize="8" fill="#fff">2018</text></svg> },
  { name: "TP", icon: <svg width="30" height="30"><rect x="2" y="2" width="26" height="26" rx="3" fill="#c9cdea" /><path d="M1 8c6-6 22-6 28-3M5 6c-5 5 0 9 3 5M11 9v16M15 9v17M19 9v8c6 1 8-3 7-8M8 26h8" fill="none" stroke="#2e7f95" strokeWidth="2.200" /></svg> },
  { name: "VM", icon: <svg width="30" height="36"><path d="M9 5c4 0 5-2 5-4h2c0 2 1 4 5 4z" fill="#a22a2c" /><path d="M13 31h4l-1 5h-2z" fill="#2d6272" /><path d="M3 7h24c1 4 1 8 1 11h-5c0-3 0-5-1-7H8c-1 2-1 4-1 7H2c0-3 0-7 1-11z" fill="#2c3e78" /><path d="M2 18h5c0 2 0 4 1 6h14c1-2 1-4 1-6h5c0 4 0 8-1 12H3c-1-4-1-8-1-12z" fill="#b23034" /></svg> },
  { name: "Удалённый стол", icon: <svg width="30" height="36"><path d="M2 1l23 2-3 22L4 22z" fill="#aeb6c2" /><path d="M4 3l18 2-2 17L6 20z" fill="#1735d1" /><path d="M13 4l9 1-2 13z" fill="#7f95f0" /><ellipse cx="13" cy="31" rx="8" ry="4" fill="#c9d0da" /><circle cx="22" cy="28" r="7" fill="#dfe9dc" /><path d="M18 26l3 2-3 3M26 25l-3 2 3 3" fill="none" stroke="#2f9e3b" strokeWidth="2" /></svg> },
  { name: "Терминал", icon: <svg width="28" height="28"><rect x=".5" y="1.500" width="27" height="25" fill="#050505" stroke="#a8a8a8" /><path d="M1 2h26v3H1z" fill="#cfcfcf" /><text x="3" y="13" fontFamily="Liberation Mono" fontSize="7" fill="#fff">C:\_</text></svg>, run: true },
  { name: "Окно", icon: <svg width="28" height="28"><rect x=".5" y="1.500" width="27" height="25" fill="#eef0f1" stroke="#b9bcc0" /><path d="M3 6h12v18H3z" fill="#458a86" /><path d="M17 6h5v18h-5z" fill="#d4d7da" /><path d="M24 6h3v12h-3z" fill="#3f83a8" /></svg>, run: true },
  { name: "Java", icon: <JavaTile />, run: true },
  { name: "Java 2", icon: <JavaTile />, run: true },
  { name: "JMeter", icon: <svg width="16" height="32" viewBox="0 0 16 32"><defs><linearGradient id="plume" x1="0" y1="1" x2="0" y2="0"><stop stopColor="#7a2f8e" /><stop offset=".5" stopColor="#cc2336" /><stop offset="1" stopColor="#f79a23" /></linearGradient></defs><path d="M14 0c2 3 1 9-2 15-2 5-5 8-8 9l-3 7C1 22 6 5 14 0z" fill="url(#plume)" /></svg>, run: true },
];

const PaintDefs = styled.svg`
  position: absolute;
`;

export default function App() {
  return (
    <Screen>
      <Global />
      <PaintDefs width="0" height="0" aria-hidden="true">
        <defs>
          <linearGradient id="flame" x1="0" y1="0" x2="0" y2="1">
            <stop stopColor="#f05a28" />
            <stop offset="0.45" stopColor="#f47b20" />
            <stop offset="1" stopColor="#fbca0a" />
          </linearGradient>
        </defs>
      </PaintDefs>
      <Browser />
      <GrafanaPage />
      <Downloads>
        <DownloadItem>
          <svg width="16" height="22"><path d="M1 2h12v18H1z" fill="#f4cf57" /><path d="M13 12h2v8h-2z" fill="#e3b93b" /><path d="M7.500 0v20" stroke="#6b6b6b" strokeWidth="3" strokeDasharray="2 1" /></svg>
          <FileLink href="#">h2-2019-10-14.zip</FileLink>
          <button aria-label="Меню загрузки"><Line size={16} w={2.400}><path d="M4 16l8-8 8 8" /></Line></button>
        </DownloadItem>
        <ShowAll>Показать все</ShowAll>
        <button aria-label="Закрыть панель"><Close w={2.600} /></button>
      </Downloads>
      <Taskbar>
        <TaskButton aria-label="Пуск">
          <svg width="20" height="20" fill="#fff"><path d="M0 3l8.500-1.200v7.700H0zM9.500 1.600L20 0v9.500H9.500zM0 10.500h8.500v7.700L0 17zM9.500 10.500H20V20L9.500 18.400z" /></svg>
        </TaskButton>
        {apps.map((a) => <TaskButton key={a.name} aria-label={a.name} $on={a.on} $run={a.run}>{a.icon}</TaskButton>)}
        <Tray>
          <Line size={20} w={1.600}><path d="M3 16l9-9 9 9" /></Line>
          <LangBox>En</LangBox>
          <svg width="20" height="20" fill="none" stroke="#fff"><path d="M5 3.500h14.500v11H5M12 15v3M8 18.500h8M.5 1.500h4v5h-4zM2.500 7v7.500H5" /></svg>
          <svg width="22" height="20" fill="none" stroke="#fff"><path d="M1 7h3l4-4v14l-4-4H1zM11 7c2 2 2 4 0 6M14 5c3 3 3 7 0 10" /><path d="M17 3c4 4 4 10 0 14" stroke="#777" /></svg>
          <span>ENG</span>
          <Clock>20:39<br />14.08.2020</Clock>
          <svg width="20" height="22"><path d="M0 1h20v16h-5l-4 4v-4H0z" fill="#fff" /><path d="M4 5h12M4 9h12M4 13h7" stroke="#19212b" /><path d="M18 12a5 5 0 1 0 1 8 5 5 0 0 1-1-8z" fill="#fff" stroke="#19212b" /></svg>
          <PeekEdge />
        </Tray>
      </Taskbar>
    </Screen>
  );
}
